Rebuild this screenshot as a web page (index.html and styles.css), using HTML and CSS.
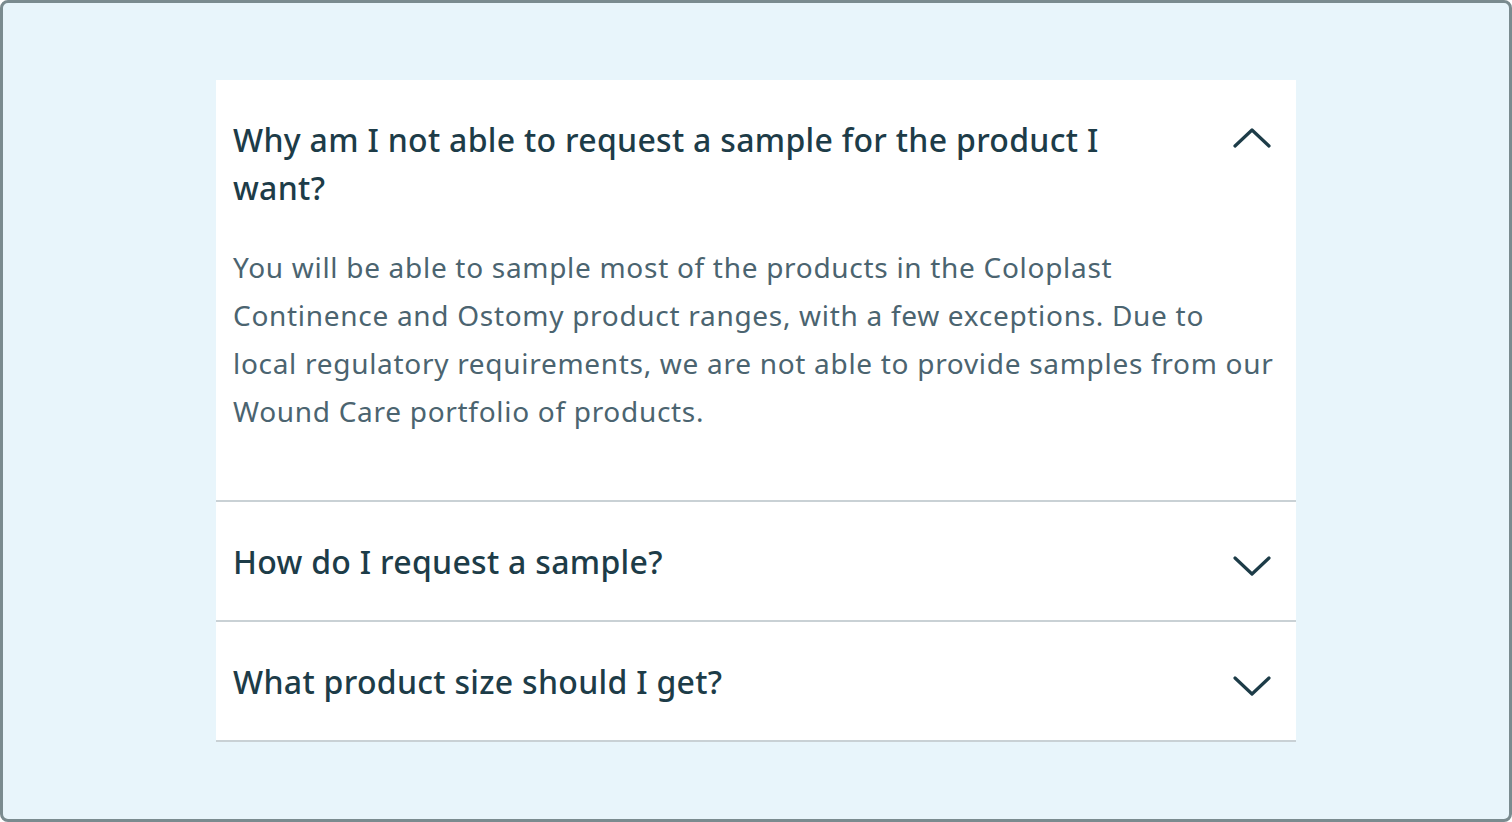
FILE: index.html
```html
<!DOCTYPE html>
<html lang="en">
<head>
  <meta charset="UTF-8">
  <title>Samples FAQ</title>
  <link rel="stylesheet" href="styles.css">
</head>
<body>

  <div class="frame">
    <div class="faq">

      <div class="item open">
        <div class="question">
          <h3>Why am I not able to request a sample for the product I want?</h3>
          <svg class="chevron" viewBox="0 0 38 26"><path d="M2 18 L19 2 L36 18" /></svg>
        </div>
        <p class="answer">You will be able to sample most of the products in the Coloplast<br>
          Continence and Ostomy product ranges, with a few exceptions. Due to<br>
          local regulatory requirements, we are not able to provide samples from our<br>
          Wound Care portfolio of products.</p>
      </div>

      <div class="item">
        <div class="question">
          <h3>How do I request a sample?</h3>
          <svg class="chevron" viewBox="0 0 38 26"><path d="M2 8 L19 24 L36 8" /></svg>
        </div>
      </div>

      <div class="item">
        <div class="question">
          <h3>What product size should I get?</h3>
          <svg class="chevron" viewBox="0 0 38 26"><path d="M2 8 L19 24 L36 8" /></svg>
        </div>
      </div>

    </div>
  </div>

</body>
</html>
```

FILE: styles.css
```css
html, body { margin: 0; height: 100%; }
body { font-family: "Noto Sans", Arial, sans-serif; }

.frame {
  box-sizing: border-box;
  height: 822px;
  background: #e8f5fb;
  border: 3px solid #7a8b8f;
  border-radius: 8px;
  padding-top: 77px;
}

.faq {
  width: 1080px;
  margin-left: 213px;
  background: #fff;
}

.item {
  border-bottom: 2px solid #c9d1d5;
  padding: 36px 25px 34px 17px;
}
.item.open { padding-bottom: 65px; }

.question {
  display: flex;
  justify-content: space-between;
  align-items: flex-start;
}
.question h3 {
  margin: 0;
  width: 900px;
  font-size: 32px;
  font-weight: 500;
  letter-spacing: 0.3px;
  line-height: 48px;
  color: #1d3c48;
}
.chevron {
  margin-top: 12px;
  width: 38px;
  height: 26px;
}
.chevron path {
  fill: none;
  stroke: #1d3c48;
  stroke-width: 3.2;
  stroke-linecap: round;
  stroke-linejoin: round;
}

.answer {
  margin: 31px 0 0;
  white-space: nowrap;
  font-size: 28px;
  letter-spacing: 0.7px;
  line-height: 48px;
  color: #4b6470;
}
```
